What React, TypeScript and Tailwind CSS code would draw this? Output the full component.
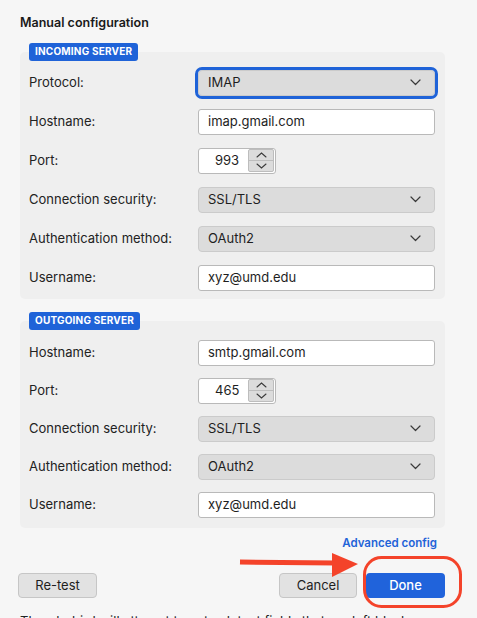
import React from 'react';

const font = { fontFamily: 'Inter, "Noto Sans", "Liberation Sans", sans-serif' };

const Chevron = () => (
  <svg width="11" height="7" viewBox="0 0 11 7" className="shrink-0">
    <path d="M1 1l4.5 4.5L10 1" fill="none" stroke="#3a3a3a" strokeWidth="1.2" strokeLinecap="round" strokeLinejoin="round" />
  </svg>
);

const Select = ({ value, focused }: { value: string; focused?: boolean }) => (
  <div
    className={
      'flex h-[26px] w-[237px] items-center justify-between rounded-[4px] border border-[#cbcbcb] bg-[#dcdcdc] pl-[9px] pr-[13px] text-[13px] text-[#1e1e1e] ' +
      (focused ? 'outline-[3px] outline-solid outline-[#1f63d8]' : '')
    }
  >
    <span>{value}</span>
    <Chevron />
  </div>
);

const TextInput = ({ value }: { value: string }) => (
  <div className="flex h-[26px] w-[237px] items-center rounded-[3px] border border-[#b9b9b9] bg-white pl-[9px] text-[13px] text-[#1e1e1e]">
    {value}
  </div>
);

const PortInput = ({ value }: { value: string }) => (
  <div className="flex h-[26px] w-[78px] items-center rounded-[3px] border border-[#b9b9b9] bg-white pl-[16px] pr-[1px] text-[13px] text-[#1e1e1e]">
    <span className="w-[34px]">{value}</span>
    <div className="flex h-[23px] w-[26px] flex-col rounded-[2px] border border-[#bdbdbd] bg-[#dcdcdc]">
      <div className="flex flex-1 items-center justify-center border-b border-[#bdbdbd]">
        <svg width="11" height="6" viewBox="0 0 11 6">
          <path d="M1 5l4.5-4L10 5" fill="none" stroke="#3a3a3a" strokeWidth="1.1" strokeLinecap="round" />
        </svg>
      </div>
      <div className="flex flex-1 items-center justify-center">
        <svg width="11" height="6" viewBox="0 0 11 6">
          <path d="M1 1l4.5 4L10 1" fill="none" stroke="#3a3a3a" strokeWidth="1.1" strokeLinecap="round" />
        </svg>
      </div>
    </div>
  </div>
);

const Row = ({ label, children }: { label: string; children: React.ReactNode }) => (
  <div className="flex h-[26px] items-center">
    <div className="w-[169px] text-[13px] text-[#222]">{label}</div>
    {children}
  </div>
);

const Badge = ({ text }: { text: string }) => (
  <div className="relative z-10 ml-[9px] flex h-[18px] w-fit items-center rounded-[3px] bg-[#1f63d8] px-[6px] text-[10px] font-bold tracking-[0.2px] text-white">
    {text}
  </div>
);

export default function App() {
  return (
    <div style={font} className="relative h-[618px] w-[477px] overflow-hidden bg-[#f6f6f6] pl-[20px] pr-[32px]">
      <div className="pt-[14px] text-[12.5px] font-semibold text-[#1a1a1a]">Manual configuration</div>

      <div className="mt-[10px]">
        <Badge text="INCOMING SERVER" />
        <div className="-mt-[9px] flex flex-col gap-[13px] rounded-[5px] bg-[#efefef] pb-[8px] pl-[9px] pr-[10px] pt-[18px]">
          <Row label="Protocol:"><Select value="IMAP" focused /></Row>
          <Row label="Hostname:"><TextInput value="imap.gmail.com" /></Row>
          <Row label="Port:"><PortInput value="993" /></Row>
          <Row label="Connection security:"><Select value="SSL/TLS" /></Row>
          <Row label="Authentication method:"><Select value="OAuth2" /></Row>
          <Row label="Username:"><TextInput value="xyz@umd.edu" /></Row>
        </div>
      </div>

      <div className="mt-[13px]">
        <Badge text="OUTGOING SERVER" />
        <div className="-mt-[9px] flex flex-col gap-[12px] rounded-[5px] bg-[#efefef] pb-[10px] pl-[9px] pr-[10px] pt-[19px]">
          <Row label="Hostname:"><TextInput value="smtp.gmail.com" /></Row>
          <Row label="Port:"><PortInput value="465" /></Row>
          <Row label="Connection security:"><Select value="SSL/TLS" /></Row>
          <Row label="Authentication method:"><Select value="OAuth2" /></Row>
          <Row label="Username:"><TextInput value="xyz@umd.edu" /></Row>
        </div>
      </div>

      <div className="mt-[7px] flex justify-end pr-[8px] text-[11.5px] font-semibold text-[#1f63d8]">Advanced config</div>

      <div className="-ml-[2px] mt-[21px] flex items-center">
        <button className="flex h-[25px] w-[79px] items-center justify-center rounded-[4px] border border-[#c6c6c6] bg-[#e2e2e2] text-[13px] text-[#1e1e1e]">
          Re-test
        </button>
        <div className="flex-1" />
        <button className="flex h-[25px] w-[78px] items-center justify-center rounded-[4px] border border-[#c6c6c6] bg-[#e2e2e2] text-[13px] text-[#1e1e1e]">
          Cancel
        </button>
        <button className="ml-[9px] flex h-[25px] w-[79px] items-center justify-center rounded-[4px] bg-[#2063db] text-[13px] font-medium text-white">
          Done
        </button>
      </div>

      <div className="mt-[14px] whitespace-nowrap text-[13px] text-[#222]">
        Thunderbird will attempt to auto-detect fields that are left blank.
      </div>

      {/* annotation: arrow + highlight */}
      <svg className="pointer-events-none absolute left-0 top-0" width="477" height="618">
        <line x1="240" y1="562" x2="336" y2="563" stroke="#f4432a" strokeWidth="5" />
        <polygon points="332,553 358,564 332,577" fill="#f4432a" />
        <rect x="364.5" y="557.5" width="96" height="49" rx="17" fill="none" stroke="#f4432a" strokeWidth="3" />
      </svg>
    </div>
  );
}
